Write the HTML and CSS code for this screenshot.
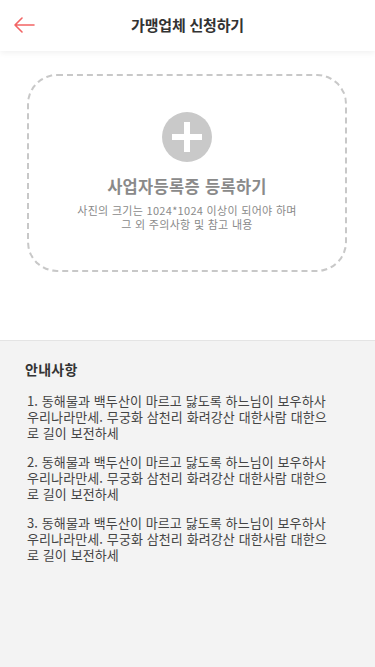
FILE: index.html
```html
<!DOCTYPE html>
<html lang="ko">
<head>
<meta charset="utf-8">
<meta name="viewport" content="width=device-width, initial-scale=1">
<link rel="stylesheet" href="styles.css">
</head>
<body>
<div class="page">
  <header class="header">
    <button class="back" aria-label="뒤로">
      <svg width="22" height="16" viewBox="0 0 22 16"><path d="M21 8H2M9 1L2 8l7 7" fill="none" stroke="#f26464" stroke-width="1.6" stroke-linecap="round" stroke-linejoin="round"/></svg>
    </button>
    <h1 class="title">가맹업체 신청하기</h1>
  </header>
  <main class="upload-wrap">
    <div class="upload">
      <div class="plus">
        <svg width="50" height="50" viewBox="0 0 50 50"><circle cx="25" cy="25" r="25" fill="#c9c9c9"/><rect x="10" y="22" width="30" height="6" fill="#fff"/><rect x="22" y="10" width="6" height="30" fill="#fff"/></svg>
      </div>
      <div class="upload-title">사업자등록증 등록하기</div>
      <div class="upload-desc">사진의 크기는 1024*1024 이상이 되어야 하며<br>그 외 주의사항 및 참고 내용</div>
    </div>
  </main>
  <section class="notice">
    <h2 class="notice-title">안내사항</h2>
    <p class="notice-item">1. 동해물과 백두산이 마르고 닳도록 하느님이 보우하사 우리나라만세. 무궁화 삼천리 화려강산 대한사람 대한으로 길이 보전하세</p>
    <p class="notice-item">2. 동해물과 백두산이 마르고 닳도록 하느님이 보우하사 우리나라만세. 무궁화 삼천리 화려강산 대한사람 대한으로 길이 보전하세</p>
    <p class="notice-item">3. 동해물과 백두산이 마르고 닳도록 하느님이 보우하사 우리나라만세. 무궁화 삼천리 화려강산 대한사람 대한으로 길이 보전하세</p>
  </section>
</div>
</body>
</html>
```
FILE: styles.css
```css
* { box-sizing: border-box; }
html, body { margin: 0; padding: 0; }
body {
  font-family: "Noto Sans CJK KR", "Noto Sans", sans-serif;
  background: #fff;
  color: #333;
}
.page {
  width: 375px;
  min-height: 667px;
  display: flex;
  flex-direction: column;
}
.header {
  height: 51px;
  display: flex;
  align-items: center;
  justify-content: center;
  position: relative;
  background: #fff;
  box-shadow: 0 2px 6px rgba(0,0,0,0.06);
  z-index: 1;
}
.back {
  position: absolute;
  left: 13px;
  top: 17px;
  border: 0;
  background: none;
  padding: 0;
  width: 22px;
  height: 16px;
  display: block;
}
.back svg { display: block; }
.title {
  margin: 0 0 2px;
  font-size: 15px;
  font-weight: 700;
  color: #333;
  letter-spacing: -0.2px;
}
.upload-wrap {
  padding: 23px 28px 68px 27px;
}
.upload {
  height: 198px;
  border: 2.5px dashed #c8c8c8;
  border-radius: 30px;
  display: flex;
  flex-direction: column;
  align-items: center;
  padding-top: 36px;
}
.plus svg { display: block; }
.upload-title {
  margin-top: 13px;
  font-size: 16.5px;
  font-weight: 700;
  color: #8a8a8a;
  letter-spacing: 0.3px;
  line-height: 22px;
}
.upload-desc {
  margin-top: 6px;
  font-size: 11px;
  color: #8a8a8a;
  text-align: center;
  line-height: 14px;
  letter-spacing: 0.3px;
}
.notice {
  flex: 1;
  background: #f3f3f3;
  border-top: 1px solid #e4e4e4;
  padding: 18px 27px 20px 27px;
}
.notice-title {
  margin: 0 0 14px -2px;
  font-size: 14px;
  font-weight: 700;
  color: #333;
  line-height: 20px;
  letter-spacing: 0.3px;
}
.notice-item {
  margin: 0 0 13px;
  font-size: 13px;
  line-height: 16px;
  color: #444;
  letter-spacing: 0.1px;
  word-break: break-all;
  padding-right: 18px;
}
```
